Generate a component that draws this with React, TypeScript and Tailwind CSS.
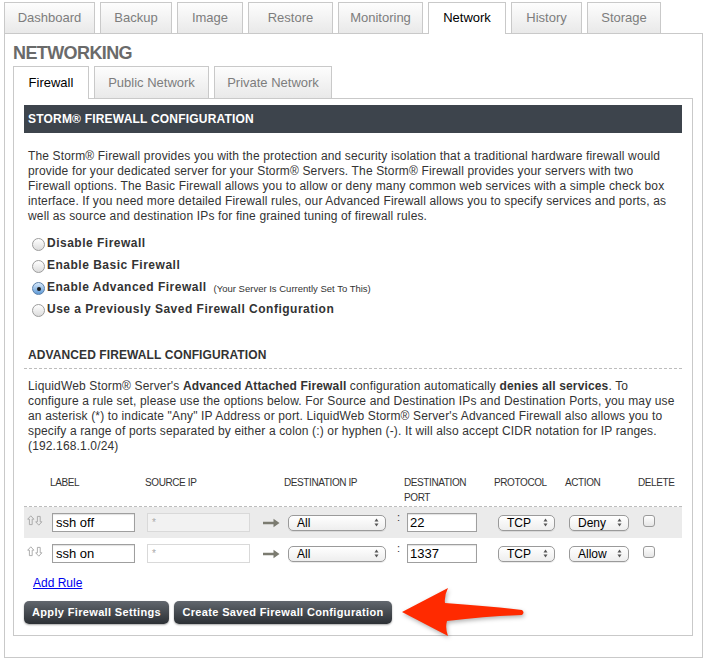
import React from 'react';

const topTabs = [
  { name: 'Dashboard', w: 'w-[91px]' },
  { name: 'Backup', w: 'w-[72px]' },
  { name: 'Image', w: 'w-[66px]' },
  { name: 'Restore', w: 'w-[85px]' },
  { name: 'Monitoring', w: 'w-[85px]' },
  { name: 'Network', w: 'w-[78px]', active: true },
  { name: 'History', w: 'w-[71px]' },
  { name: 'Storage', w: 'w-[74px]' },
];

const subTabs = [
  { name: 'Firewall', w: 'w-[76px]', active: true },
  { name: 'Public Network', w: 'w-[115px]' },
  { name: 'Private Network', w: 'w-[118px]' },
];

const radios = [
  { label: 'Disable Firewall' },
  { label: 'Enable Basic Firewall' },
  { label: 'Enable Advanced Firewall', note: '(Your Server Is Currently Set To This)', checked: true },
  { label: 'Use a Previously Saved Firewall Configuration' },
];

const rules = [
  { label: 'ssh off', port: '22', protocol: 'TCP', action: 'Deny', shaded: true },
  { label: 'ssh on', port: '1337', protocol: 'TCP', action: 'Allow', shaded: false },
];

function Radio({ checked }: { checked?: boolean }) {
  if (checked) {
    return (
      <span className="mt-[3px] flex h-[13px] w-[13px] shrink-0 items-center justify-center rounded-full border border-[#5b7fa8] bg-linear-to-b from-[#d6e8fa] to-[#5e9ad6]">
        <span className="h-[4px] w-[4px] rounded-full bg-[#1a1a1a]" />
      </span>
    );
  }
  return (
    <span className="mt-[3px] h-[13px] w-[13px] shrink-0 rounded-full border border-[#9c9c9c] bg-linear-to-b from-[#ffffff] to-[#dcdcdc]" />
  );
}

function SelectBox({ value, w }: { value: string; w: string }) {
  return (
    <div
      className={`flex h-[16px] ${w} items-center justify-between rounded-[5px] border border-[#9a9a9a] bg-linear-to-b from-[#ffffff] to-[#eeeeee] pl-[8px] pr-[6px] text-[12px] text-black shadow-[0_1px_0_rgba(0,0,0,0.08)]`}
    >
      <span>{value}</span>
      <svg width="5" height="9" viewBox="0 0 5 9">
        <path d="M2.5 0.5 L4.5 3.5 L0.5 3.5 Z" fill="#555" />
        <path d="M2.5 8.5 L4.5 5.5 L0.5 5.5 Z" fill="#555" />
      </svg>
    </div>
  );
}

function MoveIcon() {
  return (
    <svg width="16" height="11" viewBox="0 0 16 11">
      <path
        d="M3.8 0.8 L6.9 4.2 L5.2 4.2 L5.2 9.6 L2.4 9.6 L2.4 4.2 L0.7 4.2 Z"
        fill="none"
        stroke="#a5a5a5"
        strokeWidth="0.9"
        strokeLinejoin="round"
      />
      <path
        d="M11.8 10.2 L14.9 6.8 L13.2 6.8 L13.2 1.4 L10.4 1.4 L10.4 6.8 L8.7 6.8 Z"
        fill="none"
        stroke="#a5a5a5"
        strokeWidth="0.9"
        strokeLinejoin="round"
      />
    </svg>
  );
}

function GrayArrow() {
  return (
    <svg width="17" height="10" viewBox="0 0 17 10">
      <path d="M0 3.8 L10.5 3.8 L10.5 0.8 L16.5 5 L10.5 9.2 L10.5 6.2 L0 6.2 Z" fill="#7b7b70" />
    </svg>
  );
}

export default function App() {
  return (
    <div className="relative h-[661px] w-[707px] overflow-hidden bg-white font-['Liberation_Sans',Arial,sans-serif] text-[#333]">
      {/* top tabs */}
      <div className="flex gap-[5px] pl-[4px] pt-[2px]">
        {topTabs.map((t) => (
          <div
            key={t.name}
            className={
              t.active
                ? `relative z-10 -mb-px flex h-[32px] ${t.w} items-center justify-center border border-b-0 border-[#c9c9c9] bg-white pb-[1px] text-[13px] text-black`
                : `flex h-[31px] ${t.w} items-center justify-center border border-b-0 border-[#c9c9c9] bg-linear-to-b from-[#fdfdfd] to-[#e9e9e9] text-[13px] text-[#7d7d7d]`
            }
          >
            {t.name}
          </div>
        ))}
      </div>

      {/* main panel */}
      <div className="ml-[4px] h-[625px] w-[699px] border border-[#c9c9c9] pl-[8px]">
        <h1 className="mt-[9px] text-[18px] leading-[20px] font-bold tracking-[-0.6px] text-[#6a6a6a]">
          NETWORKING
        </h1>

        <div className="mt-[3px] flex gap-[5px]">
          {subTabs.map((t) => (
            <div
              key={t.name}
              className={
                t.active
                  ? `relative z-10 -mb-px flex h-[33px] ${t.w} items-center justify-center border border-b-0 border-[#c9c9c9] bg-white pb-[1px] text-[13px] text-black`
                  : `flex h-[32px] ${t.w} items-center justify-center border border-b-0 border-[#c9c9c9] bg-linear-to-b from-[#fdfdfd] to-[#e9e9e9] text-[13px] text-[#7d7d7d]`
              }
            >
              {t.name}
            </div>
          ))}
        </div>

        {/* firewall panel */}
        <div className="h-[538px] w-[680px] border border-[#c9c9c9] pr-[10px] pl-[10px] pt-[6px]">
          <div className="flex h-[28px] items-center bg-[#3d444c] pl-[4px] text-[12px] font-bold tracking-[0.2px] text-white">
            STORM® FIREWALL CONFIGURATION
          </div>

          <p className="mt-[16px] px-[4px] text-[12px] leading-[15px] tracking-[0.15px] text-[#333]">
            The Storm® Firewall provides you with the protection and security isolation that a traditional hardware
            firewall would provide for your dedicated server for your Storm® Servers. The Storm® Firewall provides your
            servers with two Firewall options. The Basic Firewall allows you to allow or deny many common web services
            with a simple check box interface. If you need more detailed Firewall rules, our Advanced Firewall allows you
            to specify services and ports, as well as source and destination IPs for fine grained tuning of firewall
            rules.
          </p>

          <div className="mt-[11px] pl-[8px]">
            {radios.map((r) => (
              <div key={r.label} className="flex h-[22px] items-start gap-[2px]">
                <Radio checked={r.checked} />
                <span className="text-[12px] leading-[16px] font-bold tracking-[0.5px] text-[#333]">{r.label}</span>
                {r.note && (
                  <span className="ml-[5px] pt-[2px] text-[9.5px] leading-[16px] text-[#333]">{r.note}</span>
                )}
              </div>
            ))}
          </div>

          <h2 className="mt-[25px] px-[4px] text-[12px] leading-[15px] font-bold tracking-[0.1px] text-[#333]">
            ADVANCED FIREWALL CONFIGURATION
          </h2>
          <div className="mt-[5px] border-t border-dashed border-[#bdbdbd]" />

          <p className="mt-[10px] px-[4px] text-[12px] leading-[15px] tracking-[0.15px] text-[#333]">
            LiquidWeb Storm® Server's <b>Advanced Attached Firewall</b> configuration automatically{' '}
            <b>denies all services</b>. To configure a rule set, please use the options below. For Source and
            Destination IPs and Destination Ports, you may use an asterisk (*) to indicate "Any" IP Address or port.
            LiquidWeb Storm® Server's Advanced Firewall also allows you to specify a range of ports separated by either
            a colon (:) or hyphen (-). It will also accept CIDR notation for IP ranges. (192.168.1.0/24)
          </p>

          {/* rules table */}
          <div className="mt-[21px]">
            <div className="flex text-[10px] leading-[15px] tracking-[-0.4px] text-[#333]">
              <div className="w-[26px]" />
              <div className="w-[95px]">LABEL</div>
              <div className="w-[139px]">SOURCE IP</div>
              <div className="w-[120px]">DESTINATION IP</div>
              <div className="w-[90px]">
                DESTINATION
                <br />
                PORT
              </div>
              <div className="w-[71px]">PROTOCOL</div>
              <div className="w-[73px]">ACTION</div>
              <div>DELETE</div>
            </div>

            <div className="mt-[1px] border-t border-dashed border-[#bdbdbd]">
              {rules.map((r) => (
                <div
                  key={r.label}
                  className={`flex h-[31px] items-center pl-[3px] ${r.shaded ? 'bg-[#ebebeb]' : 'bg-white'}`}
                >
                  <div className="w-[25px] pb-[4px]">
                    <MoveIcon />
                  </div>
                  <div className="w-[95px]">
                    <div className="flex h-[19px] w-[83px] items-center border border-[#9f9f9f] bg-white pl-[3px] text-[13px] text-black shadow-[inset_0_1px_1px_rgba(0,0,0,0.12)]">
                      {r.label}
                    </div>
                  </div>
                  <div className="w-[116px]">
                    <div className="flex h-[19px] w-[103px] items-start border border-[#d9d9d9] bg-[rgba(255,255,255,0.35)] pt-[1px] pl-[4px] text-[10px] text-[#aaa]">
                      *
                    </div>
                  </div>
                  <div className="w-[25px]">
                    <GrayArrow />
                  </div>
                  <div className="w-[109px]">
                    <SelectBox value="All" w="w-[98px]" />
                  </div>
                  <div className="w-[10px] self-start pt-[5px] text-[11px] leading-[10px] text-[#333]">:</div>
                  <div className="w-[91px]">
                    <div className="flex h-[19px] w-[70px] items-center border border-[#9f9f9f] bg-white pl-[2px] text-[13px] text-black shadow-[inset_0_1px_1px_rgba(0,0,0,0.12)]">
                      {r.port}
                    </div>
                  </div>
                  <div className="w-[71px]">
                    <SelectBox value={r.protocol} w="w-[57px]" />
                  </div>
                  <div className="w-[74px]">
                    <SelectBox value={r.action} w="w-[60px]" />
                  </div>
                  <div className="pb-[3px]">
                    <div className="h-[12px] w-[12px] rounded-[3px] border border-[#9a9a9a] bg-linear-to-b from-[#ffffff] to-[#e6e6e6]" />
                  </div>
                </div>
              ))}
            </div>
          </div>

          <a href="#" className="mt-[7px] ml-[9px] block w-fit text-[12px] leading-[15px] text-[#0000ee] underline">
            Add Rule
          </a>

          <div className="mt-[10px] flex gap-[5px]">
            <button className="h-[23px] w-[145px] rounded-[5px] bg-linear-to-b from-[#62676e] to-[#2c3035] text-[11px] font-bold tracking-[0.35px] text-white shadow-[0_1px_2px_rgba(0,0,0,0.35)]">
              Apply Firewall Settings
            </button>
            <button className="h-[23px] w-[218px] rounded-[5px] bg-linear-to-b from-[#62676e] to-[#2c3035] text-[11px] font-bold tracking-[0.35px] text-white shadow-[0_1px_2px_rgba(0,0,0,0.35)]">
              Create Saved Firewall Configuration
            </button>
          </div>
        </div>
      </div>

      {/* red annotation arrow */}
      <svg
        className="absolute top-[584px] left-[398px] drop-shadow-[1px_2px_2px_rgba(0,0,0,0.3)]"
        width="130"
        height="58"
        viewBox="0 0 130 58"
      >
        <path
          d="M4 28 L50 4 Q46 12 47 19 Q90 22 124 26 Q127 28.5 124 31 Q90 32 49 37 Q47 44 50 52 Z"
          fill="#ff2a00"
        />
      </svg>
    </div>
  );
}
